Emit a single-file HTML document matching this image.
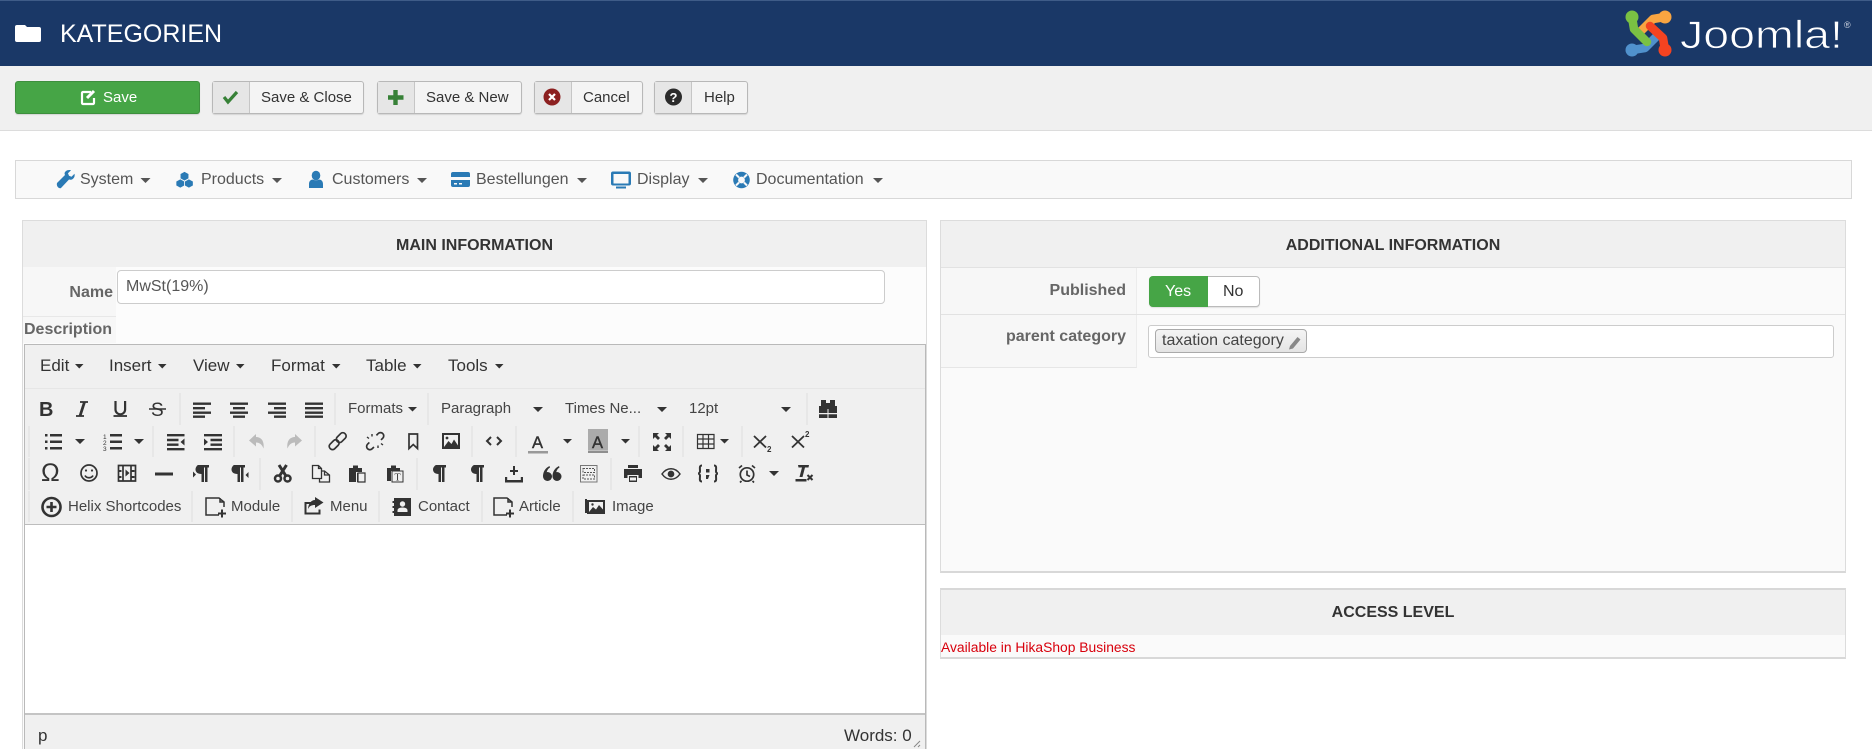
<!DOCTYPE html>
<html lang="de"><head><meta charset="utf-8"><title>Kategorien</title>
<style>
html,body{margin:0;padding:0;background:#fff;font-family:"Liberation Sans",Arial,sans-serif;color:#333}
#p{position:relative;width:1872px;height:749px;overflow:hidden;background:#fff}
.a{position:absolute;box-sizing:border-box}
.t{position:absolute;white-space:nowrap;line-height:20px;height:20px}
.btn{position:absolute;box-sizing:border-box;top:81px;height:33px;background:#f4f4f4;border:1px solid #b8b8b8;border-radius:3px;box-shadow:0 1px 1px rgba(0,0,0,.12)}
.btn i{position:absolute;left:0;top:0;bottom:0;width:36px;background:#e6e6e6;border-right:1px solid #c6c6c6}
.bt{font-size:15px;color:#333}
.nv{font-size:16px;color:#555}
.mn{font-size:17px;color:#333}
.tb{font-size:15px;color:#444}
.h{font-weight:bold;font-size:16px;color:#333;text-align:center}
.l{font-weight:bold;font-size:16px;color:#666}
svg{position:absolute;left:0;top:0}
</style></head><body><div id="p">

<div class="a" style="left:0;top:0;width:1872px;height:66px;background:#1a3867;border-top:1px solid #3f5c88"></div>
<div class="t" style="left:60px;top:24px;font-size:25px;line-height:20px;color:#fff">KATEGORIEN</div>

<div class="a" style="left:0;top:66px;width:1872px;height:65px;background:#f0f0f0;border-bottom:1px solid #dcdcdc"></div>
<div class="btn" style="left:15px;width:185px;background:#46a546;border-color:#3d8f3d"></div>
<div class="t" style="left:103px;top:88px;font-size:15px;color:#fff">Save</div>
<div class="btn" style="left:212px;width:152px"><i></i></div>
<div class="t bt" style="left:261px;top:88px">Save &amp; Close</div>
<div class="btn" style="left:377px;width:145px"><i></i></div>
<div class="t bt" style="left:426px;top:88px">Save &amp; New</div>
<div class="btn" style="left:534px;width:109px"><i></i></div>
<div class="t bt" style="left:583px;top:88px">Cancel</div>
<div class="btn" style="left:654px;width:94px"><i></i></div>
<div class="t bt" style="left:704px;top:88px">Help</div>

<div class="a" style="left:15px;top:160px;width:1837px;height:39px;background:#f9f9f9;border:1px solid #d8d8d8"></div>
<div class="t nv" style="left:80px;top:170px">System</div>
<div class="t nv" style="left:201px;top:170px">Products</div>
<div class="t nv" style="left:332px;top:170px">Customers</div>
<div class="t nv" style="left:476px;top:170px">Bestellungen</div>
<div class="t nv" style="left:637px;top:170px">Display</div>
<div class="t nv" style="left:756px;top:170px">Documentation</div>

<!-- Main panel -->
<div class="a" style="left:22px;top:220px;width:905px;height:529px;background:#fcfcfc;border:1px solid #dcdcdc;border-bottom:0"></div>
<div class="a" style="left:23px;top:221px;width:903px;height:46px;background:#f0f0f0"></div>
<div class="a" style="left:23px;top:267px;width:93px;height:76px;background:#f7f7f7"></div>
<div class="a" style="left:23px;top:316px;width:93px;height:1px;background:#e8e8e8"></div>
<div class="t h" style="left:23px;top:236px;width:903px">MAIN INFORMATION</div>
<div class="t l" style="left:23px;top:283px;width:90px;text-align:right">Name</div>
<div class="a" style="left:117px;top:270px;width:768px;height:34px;background:#fff;border:1px solid #ccc;border-radius:4px"></div>
<div class="t" style="left:126px;top:277px;font-size:16px;color:#555">MwSt(19%)</div>
<div class="t l" style="left:24px;top:320px">Description</div>

<!-- Editor -->
<div class="a" style="left:24px;top:344px;width:902px;height:405px;background:#fff;border:1px solid #b9b9b9;border-bottom:0"></div>
<div class="a" style="left:25px;top:345px;width:900px;height:180px;background:#f0f0f0;border-bottom:1px solid #bdbdbd"></div>
<div class="a" style="left:25px;top:388px;width:900px;height:1px;background:#e6e6e6"></div>
<div class="a" style="left:25px;top:713px;width:900px;height:36px;background:#f0f0f0;border-top:2px solid #c4c4c4"></div>
<div class="t mn" style="left:40px;top:356px">Edit</div>
<div class="t mn" style="left:109px;top:356px">Insert</div>
<div class="t mn" style="left:193px;top:356px">View</div>
<div class="t mn" style="left:271px;top:356px">Format</div>
<div class="t mn" style="left:366px;top:356px">Table</div>
<div class="t mn" style="left:448px;top:356px">Tools</div>
<div class="t tb" style="left:348px;top:399px">Formats</div>
<div class="t tb" style="left:441px;top:399px">Paragraph</div>
<div class="t tb" style="left:565px;top:399px">Times Ne...</div>
<div class="t tb" style="left:689px;top:399px">12pt</div>
<div class="t tb" style="left:68px;top:497px">Helix Shortcodes</div>
<div class="t tb" style="left:231px;top:497px">Module</div>
<div class="t tb" style="left:330px;top:497px">Menu</div>
<div class="t tb" style="left:418px;top:497px">Contact</div>
<div class="t tb" style="left:519px;top:497px">Article</div>
<div class="t tb" style="left:612px;top:497px">Image</div>
<div class="t mn" style="left:38px;top:726px">p</div>
<div class="t mn" style="left:844px;top:726px">Words: 0</div>

<!-- Right panels -->
<div class="a" style="left:940px;top:220px;width:906px;height:353px;background:#fafafa;border:1px solid #dcdcdc;border-bottom:2px solid #d8d8d8"></div>
<div class="a" style="left:941px;top:221px;width:904px;height:47px;background:#f0f0f0;border-bottom:1px solid #e2e2e2"></div>
<div class="a" style="left:941px;top:268px;width:196px;height:100px;background:#f7f7f7;border-bottom:1px solid #e6e6e6;border-right:1px solid #ececec"></div>
<div class="a" style="left:941px;top:314px;width:904px;height:1px;background:#e2e2e2"></div>
<div class="t h" style="left:941px;top:236px;width:904px">ADDITIONAL INFORMATION</div>
<div class="t l" style="left:941px;top:281px;width:185px;text-align:right">Published</div>
<div class="t l" style="left:941px;top:327px;width:185px;text-align:right">parent category</div>
<div class="a" style="left:1149px;top:276px;width:111px;height:31px;background:#fff;border:1px solid #bbb;border-radius:4px;box-shadow:0 1px 1px rgba(0,0,0,.1)"></div>
<div class="a" style="left:1149px;top:276px;width:59px;height:31px;background:#46a546;border-radius:4px 0 0 4px"></div>
<div class="t" style="left:1165px;top:282px;font-size:16px;color:#fff">Yes</div>
<div class="t" style="left:1223px;top:282px;font-size:16px;color:#333">No</div>
<div class="a" style="left:1148px;top:325px;width:686px;height:33px;background:#fff;border:1px solid #ccc;border-radius:3px"></div>
<div class="a" style="left:1155px;top:329px;width:152px;height:24px;background:linear-gradient(#f4f4f4,#e4e4e4);border:1px solid #aaa;border-radius:4px"></div>
<div class="t" style="left:1162px;top:331px;font-size:16px;color:#444">taxation category</div>

<div class="a" style="left:940px;top:588px;width:906px;height:71px;background:#fafafa;border:1px solid #dcdcdc;border-top:2px solid #d8d8d8;border-bottom:2px solid #d8d8d8"></div>
<div class="a" style="left:941px;top:590px;width:904px;height:45px;background:#f0f0f0"></div>
<div class="t h" style="left:941px;top:603px;width:904px">ACCESS LEVEL</div>
<div class="t" style="left:941px;top:637px;font-size:13.85px;color:#d8000c">Available in HikaShop Business</div>

<svg width="1872" height="749" viewBox="0 0 1872 749" xmlns="http://www.w3.org/2000/svg" font-family="'Liberation Sans',Arial,sans-serif">
<!-- header folder -->
<path fill="#fff" d="M17 25h8l2 2h12a2 2 0 0 1 2 2v11a2 2 0 0 1-2 2H17a2 2 0 0 1-2-2V27a2 2 0 0 1 2-2z"/>
<!-- Joomla logo -->
<g fill="none" stroke-width="8.500" stroke-linecap="round" stroke-linejoin="round">
<path stroke="#5091cd" d="M1632 50L1645 48L1658 35"/><circle cx="1632" cy="50" r="6.500" fill="#5091cd" stroke="none"/>
<path stroke="#f9a541" d="M1665 17L1653 19L1641 31"/><circle cx="1665" cy="17" r="6.500" fill="#f9a541" stroke="none"/>
<path stroke="#f44321" d="M1665 50L1663 38L1650 26"/><circle cx="1665" cy="50" r="6.500" fill="#f44321" stroke="none"/>
<path stroke="#7ac143" d="M1632 17L1634 29L1647 42"/><circle cx="1632" cy="17" r="6.500" fill="#7ac143" stroke="none"/>
</g>
<text x="1680" y="48" font-size="39" textLength="163" lengthAdjust="spacingAndGlyphs" fill="#fff" stroke="#1a3867" stroke-width=".8">Joomla!</text>
<text x="1844" y="28" font-size="9" fill="#cfd6e2">®</text>

<!-- toolbar buttons -->
<g fill="none" stroke="#fff" stroke-width="2.200"><path d="M91 92h-8a1 1 0 0 0-1 1v10a1 1 0 0 0 1 1h10a1 1 0 0 0 1-1v-5"/><path stroke-width="3" d="M87 98l7-7"/></g>
<path d="M224 97l4 5 9-10" fill="none" stroke="#378137" stroke-width="3.200"/>
<path d="M395.500 90v15M388 97.500h15.500" fill="none" stroke="#378137" stroke-width="4.400"/>
<circle cx="552" cy="97" r="8.500" fill="#8c2020"/><path d="M549 94l6 6M555 94l-6 6" stroke="#fff" stroke-width="2.200"/>
<circle cx="673.500" cy="97" r="8.500" fill="#2b2b2b"/><text x="673.500" y="102" text-anchor="middle" font-size="13" font-weight="bold" fill="#fff">?</text>

<!-- nav icons -->
<g fill="#2a7ab5">
<path d="M57 183l8-8c-1-2 0-3 1-4 1-.8 3-1.300 5-.8l-3 3 1 2.500 2.500 1 3-3c.5 2.500-.3 4-1.500 5-1 1-2.500 1.300-4 .8l-8 8.500c-1.500 1.200-5-1.500-4-5z"/>
<g stroke="#f9f9f9" stroke-width=".7"><path d="M184.500 171.500l4.300 2.300v4.800l-4.300 2.300-4.300-2.300v-4.800z"/><path d="M180.300 179l4.300 2.300v4.400l-4.300 2.300-4.300-2.300v-4.400z"/><path d="M188.900 179l4.300 2.300v4.400l-4.300 2.300-4.300-2.300v-4.400z"/></g>
<ellipse cx="316" cy="175.500" rx="4.300" ry="4.800"/><path d="M309 188v-4c0-3 2-4.500 4-4.500 1.800 1 4.200 1 6 0 2 0 4 1.500 4 4.500v4z"/>
<path d="M453 172h15a2 2 0 0 1 2 2v3h-19v-3a2 2 0 0 1 2-2zM451 180h19v5a2 2 0 0 1-2 2h-15a2 2 0 0 1-2-2z"/><path d="M454 183h3v1.500h-3zM459 183h3v1.500h-3z" fill="#f9f9f9"/>
<path d="M613 171.500h16a2 2 0 0 1 2 2v10a2 2 0 0 1-2 2h-16a2 2 0 0 1-2-2v-10a2 2 0 0 1 2-2zm.5 2.500v9.500h15V174z"/><path d="M616 186.500h10v2h-10z"/>
<circle cx="741.500" cy="180" r="8.300"/><circle cx="741.500" cy="180" r="3.400" fill="#f9f9f9"/>
<path d="M736 174.500l3 3M747 174.500l-3 3M736 185.500l3-3M747 185.500l-3-3" stroke="#f9f9f9" stroke-width="2"/>
</g>
<g fill="#555">
<path d="M140.500 178h10l-5 5zM272 178h10l-5 5zM417 178h10l-5 5zM577 178h10l-5 5zM698 178h10l-5 5zM873 178h10l-5 5z"/>
</g>

<!-- menu carets -->
<g fill="#333"><path d="M75 364h8.500l-4.250 4.500zM158 364h8.500l-4.250 4.500zM236 364h8.500l-4.250 4.500zM332 364h8.500l-4.250 4.500zM413 364h8.500l-4.250 4.500zM495 364h8.500l-4.250 4.500z"/>
<!-- toolbar carets -->
<path d="M408 407h9l-4.500 4.500zM533 407h10l-5 5zM657 407h10l-5 5zM781 407h10l-5 5z"/>
<path d="M75 439h10l-5 5zM134 439h10l-5 5zM563 439h9l-4.500 4.500zM621 439h9l-4.500 4.500zM720 439h9l-4.500 4.500zM769 471h10l-5 5z"/>
</g>
<!-- separators -->
<g stroke="#dedede" stroke-width="1"><path d="M180 393v32M335 393v32M428 393v32M807 393v32M29 426v31M153 426v31M234 426v31M315 426v31M472 426v31M516 426v31M639 426v31M683 426v31M742 426v31M29 458v32M260 458v32M417 458v32M611 458v32M29 491v31M192 491v31M292 491v31M379 491v31M482 491v31M573 491v31"/></g>

<!-- Row 1 -->
<text x="39" y="416" font-size="20" font-weight="bold" fill="#333">B</text>
<g fill="none" stroke="#333" stroke-width="2.200">
<path stroke-width="1.800" d="M80 402h8M76 416h8"/><path stroke-width="2.800" d="M84.500 402l-4.500 14"/>
<path d="M115.500 401v8.500a4.800 4.800 0 0 0 9.600 0V401"/><path d="M113.500 416h13.500" stroke-width="1.800"/>
<path stroke-width="1.500" d="M149 409h17"/>
</g>
<text x="151" y="416" font-size="19" fill="#333">S</text>
<g fill="#333">
<path d="M193 402.500h18v2.400h-18zM193 407h12v2.400h-12zM193 411.500h18v2.400h-18zM193 415.500h12v2.400h-12z"/>
<path d="M230 402.500h18v2.400h-18zM233 407h12v2.400h-12zM230 411.500h18v2.400h-18zM233 415.500h12v2.400h-12z"/>
<path d="M268 402.500h18v2.400h-18zM274 407h12v2.400h-12zM268 411.500h18v2.400h-18zM274 415.500h12v2.400h-12z"/>
<path d="M305 402.500h18v2.400h-18zM305 407h18v2.400h-18zM305 411.500h18v2.400h-18zM305 415.500h18v2.400h-18z"/>
<!-- binoculars -->
<path d="M821 400h5v6h-5zM830 400h5v6h-5zM826 403h4v6h-4zM819 406h8.500v12H819zM828.500 406h8.500v12h-8.500z"/>
<path d="M819 413h8.500v1.300H819zM828.500 413h8.500v1.300h-8.500z" fill="#f0f0f0"/>
</g>

<!-- Row 2 -->
<g fill="#333">
<path d="M45 434h2.500v2.500H45zM45 440.500h2.500v2.500H45zM45 447h2.500v2.500H45zM50 434h12v2.500H50zM50 440.500h12v2.500H50zM50 447h12v2.500H50z"/>
<path d="M110 434h12v2.500h-12zM110 440.500h12v2.500h-12zM110 447h12v2.500h-12z"/>
<path d="M167 434h17.500v2.400H167zM167 438.800h11.500v2.400H167zM167 443.500h11.500v2.400H167zM167 448h17.500v2.400H167zM184.500 438.500v7l-4-3.500z"/>
<path d="M204 434h18v2.400h-18zM210.500 438.800h11.500v2.400h-11.500zM210.500 443.500h11.500v2.400h-11.500zM204 448h18v2.400h-18zM204 438.500v7l4-3.500z"/>
<path d="M256 434l-7 6.500 7 6v-4c3.500 0 6 2 7.500 6 1-7-2-11.500-7.500-11.500z" fill="#bbb"/>
<path d="M295 434l7 6.500-7 6v-4c-3.500 0-6 2-7.500 6-1-7 2-11.500 7.500-11.500z" fill="#bbb"/>
<!-- image -->
<path d="M442 433h18v16h-18zM444 435v12h14v-12z"/><path d="M444 447l4.500-6 3 3 2.500-4.500 4 6v1.500z"/><circle cx="447" cy="438" r="1.400"/>
</g>
<text x="103" y="439" font-size="6.500" fill="#333">1</text><text x="103" y="445" font-size="6.500" fill="#333">2</text><text x="103" y="451" font-size="6.500" fill="#333">3</text>
<g fill="none" stroke="#333" stroke-width="1.700">
<g transform="rotate(-45 337.500 441)"><rect x="327" y="438" width="11" height="6.500" rx="3"/><rect x="337" y="438" width="11" height="6.500" rx="3"/></g>
<g transform="rotate(-45 375 441)"><path d="M370 438h-2.500a3.200 3.200 0 0 0 0 6.500h2.500M380 438h2.500a3.200 3.200 0 0 1 0 6.500H380"/></g>
<path stroke-width="1.400" d="M372 434v2.500M367 437l2 1.500M378 448v-2.500M383 445l-2-1.500"/>
<path d="M409 434h8.500v14.500l-4.250-4-4.250 4z"/>
<path stroke-width="2" d="M491 437l-4 4 4 4M497 437l4 4-4 4"/>
<path stroke-width="1.800" d="M754 436l12 11.500M766 436l-12 11.500M792 436l12 11.500M804 436l-12 11.500"/>
</g>
<text x="532" y="448" font-size="16.500" fill="#333" stroke="#333" stroke-width=".4">A</text><path d="M528 451h20v2.500h-20z" fill="#999"/>
<path d="M588 429h20v21h-20z" fill="#ababab"/><text x="592" y="448" font-size="16.500" fill="#333" stroke="#333" stroke-width=".4">A</text><path d="M588 450.500h20v2.500h-20z" fill="#8f8f8f"/>
<g fill="#333">
<path d="M653 433h6l-2 2 3 3-2 2-3-3-2 2zM671 433h-6l2 2-3 3 2 2 3-3 2 2zM653 451h6l-2-2 3-3-2-2-3 3-2-2zM671 451h-6l2-2-3-3 2-2 3 3 2-2z"/>
</g>
<g fill="none" stroke="#333" stroke-width="1.200"><path d="M697.500 434.500h16.500v14h-16.500zM697.500 439h16.500M697.500 444h16.500M703 434.500v14M708.500 434.500v14"/></g>
<text x="767" y="452" font-size="8" fill="#333" font-weight="bold">2</text><text x="805" y="437" font-size="8" fill="#333" font-weight="bold">2</text>

<!-- Row 3 -->
<text x="41" y="481" font-size="25" fill="#333">Ω</text>
<g fill="none" stroke="#333" stroke-width="1.700">
<circle cx="89" cy="473" r="8"/><path d="M85 475.500c1.500 3 6.500 3 8 0"/>
<path d="M118.500 465.500h17v15.500h-17zM123 465.500v15.500M131 465.500v15.500"/>
<path stroke-width="1.300" d="M312.500 465.500h6l3 3v10h-9zM321.500 471h3l5 4v7h-10v-3.500M318.500 465.500v3h3M324.500 471v4h5"/>
<circle cx="278" cy="478.500" r="3" stroke-width="2.500"/><circle cx="287.500" cy="478.500" r="3" stroke-width="2.500"/><path stroke-width="3" d="M279.500 476l7-11M286 476l-7-11"/>
<circle cx="747" cy="474.500" r="6.700"/><path d="M747 470.500v4.500l3 1.500M739 468l3-2.500M755 468l-3-2.500M741.500 481l-1.500 1.500M752.500 481l1.500 1.500"/>
<path stroke-width="2" d="M702 465.500c-3 0-2 3-2 5.500s-2 2.500-2 2.500 2 0 2 2.500-1 5.500 2 5.500M714 465.500c3 0 2 3 2 5.500s2 2.500 2 2.500-2 0-2 2.500 1 5.500-2 5.500"/>
<path stroke-width="1.500" d="M662 474c5-7 13-7 18 0-5 7-13 7-18 0z"/><circle cx="671" cy="474" r="2.500" fill="#333"/>
<path stroke-width="1" stroke="#777" d="M580.500 465.500h16.500v16.500h-16.500z"/>
<path stroke-width="1" stroke="#555" stroke-dasharray="2 1" d="M583 468.500h11.500v4H583zM583 475h11.500v4H583z"/>
</g>
<circle cx="86" cy="470.500" r="1.100" fill="#333"/><circle cx="92" cy="470.500" r="1.100" fill="#333"/>
<g fill="#333">
<path d="M118.500 470h3v2h-3zM118.500 476h3v2h-3zM131.500 470h3v2h-3zM131.500 476h3v2h-3zM125.500 469.500l4 3.500-4 3.500z"/>
<path d="M155 472.500h18v3h-18z"/>
<path d="M198 465h11v2.500h-1.500V482h-2.500v-14.500h-1V482h-2.500v-8c-4 0-6-2-6-4.500s2-4.500 2.500-4.500zM193 471.500l3 3-3 3z"/>
<path d="M234 465h11v2.500h-1.500V482H241v-14.500h-1V482h-2.500v-8c-4 0-6-2-6-4.500S233.500 465 234 465zM248.500 472v6l-3-3z"/>
<path d="M436 465h10v2.500h-1.500V482H442v-14.500h-1V482h-2.500v-8c-3.500 0-5.500-2-5.500-4.500s2.500-4.500 3-4.500z"/>
<path d="M474 465h10v2.500h-1.500V482H480v-14.500h-1V482h-2.500v-8c-3.500 0-5.500-2-5.500-4.500s2.500-4.500 3-4.500z"/>
<path d="M513 466h2v4h3v2h-3v3h-2v-3h-3v-2h3z"/><path d="M505 477h2.200v3h13.600v-3h2.200v5.500h-18z"/>
<!-- quotes -->
<circle cx="547.500" cy="476.500" r="4.500"/><path d="M543 476.500c0-5 2.500-8.500 6.500-10.500l.5 1.500c-2.500 1.500-3.500 4-3.500 7z"/>
<circle cx="557" cy="476.500" r="4.500"/><path d="M552.500 476.500c0-5 2.500-8.500 6.500-10.500l.5 1.500c-2.500 1.500-3.500 4-3.500 7z"/>
<!-- paste -->
<path d="M349 468h4v-2.500h5v2.500h4v4h-6v10h-7zM357 473h8v4h-4v5h-4z"/>
<path d="M387 468h4v-2.500h5v2.500h4v3h-13z"/><path d="M387 471h4v10h-4z"/>
<!-- print -->
<path d="M628 465h10v3h-10zM624 469h18v9h-3.500v-3h-11v3H624zM629 476h8v6h-8z"/>
<path d="M630 477.500h6v3h-6z" fill="#f0f0f0"/>
<path d="M706 469h3.500v3.500H706zM706 475h3.500l-1.500 4h-2z"/>
<!-- clear formatting -->
<path d="M798 465h11l-.5 2.500h-3.500l-2.500 9.500h-3l2.500-9.500h-3.500zM795.500 479h11v2.500h-11z"/>
<path d="M807.500 475l5 5M812.500 475l-5 5" stroke="#333" stroke-width="2" fill="none"/>
</g>
<rect x="392" y="471" width="11" height="11" fill="#f0f0f0" stroke="#333" stroke-width="1"/><text x="397.500" y="480.500" text-anchor="middle" font-family="'Liberation Serif',serif" font-size="10" fill="#333">T</text>
<path d="M358 473h7v9h-7z" fill="#f0f0f0" stroke="#333" stroke-width="1.200"/>
<!-- Row 4 -->
<g fill="none" stroke="#333" stroke-width="1.800">
<circle cx="51.500" cy="507" r="9" stroke-width="2.600"/><path stroke-width="2.600" d="M51.500 502v10M46.500 507h10"/>
<path stroke-width="1.500" d="M219 515h-13v-17h13l5 4v5M220 498v4h4"/>
<path stroke-width="1.500" d="M507 515h-13v-17h13l5 4v5M508 498v4h4"/>
<path stroke-width="2" d="M316 503h-10.500v10.500h14v-4"/>
</g>
<g fill="#333">
<path d="M221 510h2v3h3v2h-3v3h-2v-3h-3v-2h3z" transform="translate(0 -.5)"/>
<path d="M509 510h2v3h3v2h-3v3h-2v-3h-3v-2h3z" transform="translate(0 -.5)"/>
<path d="M315 497l8.500 5.500-8.500 5.500v-3c-3.500 0-5.500 1-7 4 .3-5 3-9 7-9z"/>
<path d="M394 498h17v18h-17zM392.500 501h3v2h-3zM392.500 506h3v2h-3zM392.500 511h3v2h-3z"/>
<path d="M585 499h2v14h-2z"/>
<path d="M587 500h18v14h-18zM589 502v10h14v-10z"/><path d="M589 512l4-5 3 2.500 3-4.500 4 4.500V512z"/><circle cx="592.500" cy="504.500" r="1.200"/>
</g>
<circle cx="402.500" cy="504" r="2.700" fill="#f0f0f0"/><path d="M397.500 512v-1.500c0-2 2-3 5-3s5 1 5 3v1.500z" fill="#f0f0f0"/>
<!-- status resize grip -->
<path d="M920 741l-6 6M920 745l-2 2" stroke="#888" stroke-width="1" fill="none"/>
<!-- pencil in chip -->
<path d="M1290 346l7.500-9 3 2.500-7.500 9-4 1z" fill="#888"/>
</svg>
</div></body></html>
